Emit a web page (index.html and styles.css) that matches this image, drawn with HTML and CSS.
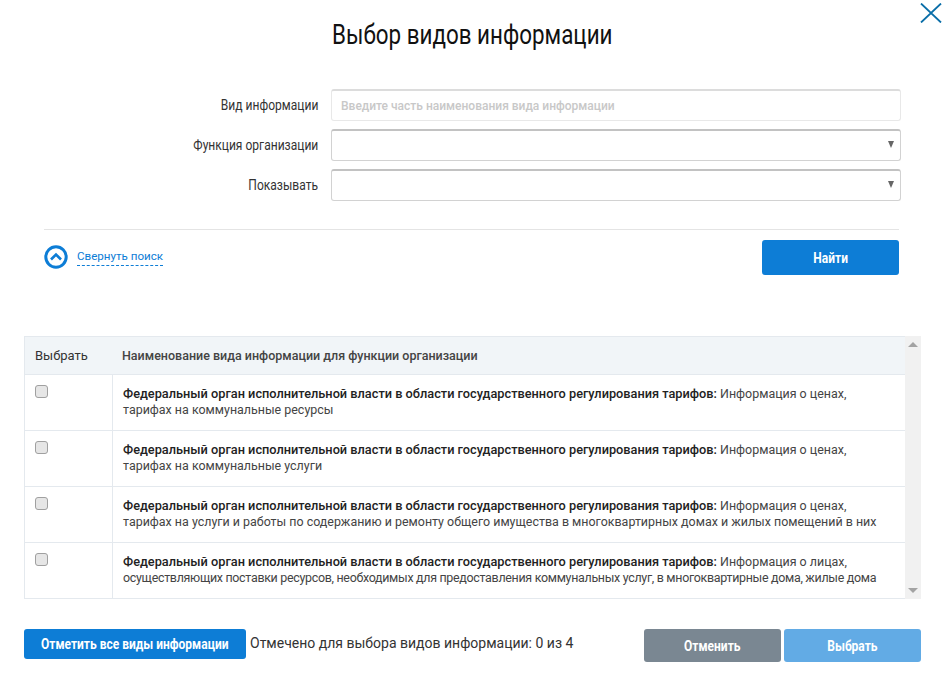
FILE: index.html
```html
<!DOCTYPE html>
<html lang="ru">
<head>
    <meta charset="UTF-8">
    <title>Выбор видов информации</title>
    <link rel="stylesheet" href="styles.css">
</head>
<body>
    <div class="dialog">
        <a class="close" href="#">
            <svg width="22" height="20" viewBox="0 0 22 20"><path d="M1 0.5L21 19.5M21 0.5L1 19.5" stroke="#0a6ea8" stroke-width="1.8" fill="none"/></svg>
        </a>
        <h1 class="title"><span class="narrow">Выбор видов информации</span></h1>

        <div class="form">
            <div class="form-row">
                <label class="form-label"><span class="narrow narrow-right">Вид информации</span></label>
                <input class="field field-light" type="text" placeholder="Введите часть наименования вида информации">
            </div>
            <div class="form-row">
                <label class="form-label"><span class="narrow narrow-right">Функция организации</span></label>
                <div class="field field-select"><span class="arrow"></span></div>
            </div>
            <div class="form-row">
                <label class="form-label"><span class="narrow narrow-right">Показывать</span></label>
                <div class="field field-select"><span class="arrow"></span></div>
            </div>
        </div>

        <div class="search-bar">
            <a class="collapse" href="#">
                <svg width="24" height="24" viewBox="0 0 24 24"><circle cx="12" cy="12" r="10.2" fill="none" stroke="#0d7dd6" stroke-width="3"/><path d="M7 14.5L12 9.5L17 14.5" fill="none" stroke="#0d7dd6" stroke-width="2.6"/></svg>
                <span class="collapse-text">Свернуть поиск</span>
            </a>
            <button class="button button-find"><span class="narrow">Найти</span></button>
        </div>

        <div class="table-wrap">
            <div class="table-main">
                <div class="row row-head">
                    <div class="cell-check">Выбрать</div>
                    <div class="cell-name">Наименование вида информации для функции организации</div>
                </div>
                <div class="row">
                    <div class="cell-check"><span class="check"></span></div>
                    <div class="cell-name"><b>Федеральный орган исполнительной власти в области государственного регулирования тарифов:</b> Информация о ценах, тарифах на коммунальные ресурсы</div>
                </div>
                <div class="row">
                    <div class="cell-check"><span class="check"></span></div>
                    <div class="cell-name"><b>Федеральный орган исполнительной власти в области государственного регулирования тарифов:</b> Информация о ценах, тарифах на коммунальные услуги</div>
                </div>
                <div class="row">
                    <div class="cell-check"><span class="check"></span></div>
                    <div class="cell-name"><b>Федеральный орган исполнительной власти в области государственного регулирования тарифов:</b> Информация о ценах, тарифах на услуги и работы по содержанию и ремонту общего имущества в многоквартирных домах и жилых помещений в них</div>
                </div>
                <div class="row">
                    <div class="cell-check"><span class="check"></span></div>
                    <div class="cell-name"><b>Федеральный орган исполнительной власти в области государственного регулирования тарифов:</b> Информация о лицах, <span class="tight">осуществляющих поставки ресурсов, необходимых для предоставления коммунальных услуг, в многоквартирные дома, жилые дома</span></div>
                </div>
            </div>
            <div class="scrollbar">
                <span class="scroll-up"></span>
                <span class="scroll-down"></span>
            </div>
        </div>

        <div class="footer">
            <button class="button button-all"><span class="narrow">Отметить все виды информации</span></button>
            <span class="status">Отмечено для выбора видов информации: 0 из 4</span>
            <button class="button button-cancel"><span class="narrow">Отменить</span></button>
            <button class="button button-select"><span class="narrow">Выбрать</span></button>
        </div>
    </div>
</body>
</html>
```

FILE: styles.css
```css
body {
    margin: 0;
    background: #fff;
    color: #333;
    font-family: Roboto, 'Liberation Sans', sans-serif;
    font-size: 12px;
}

.dialog {
    position: relative;
    width: 948px;
    height: 698px;
    box-sizing: border-box;
    padding: 19px 27px 0 24px;
}

.close {
    position: absolute;
    top: 3px;
    right: 6px;
}

/* no condensed font here, so squeeze the regular one */
.narrow {
    display: inline-block;
    white-space: nowrap;
    transform: scaleX(0.8);
}

.narrow-right {
    transform: scaleX(0.86);
    transform-origin: right center;
}

.title {
    margin: 0;
    width: 897px;
    text-align: center;
    font-size: 28px;
    line-height: 32px;
    font-weight: 400;
    color: #111;
}

.form {
    margin-top: 38px;
    padding-right: 20px;
}

.form-row {
    display: flex;
    align-items: center;
    margin-bottom: 8px;
}

.form-label {
    width: 294px;
    margin-right: 13px;
    text-align: right;
    font-size: 14px;
}

.field {
    flex: 1;
    height: 32px;
    box-sizing: border-box;
    position: relative;
    background: #fff;
    border: 1px solid #d2d2d2;
    border-top: 2px solid #c2c2c2;
    border-radius: 3px;
}

.field-light {
    padding: 0 9px;
    border-color: #e8e8e8;
    border-top: 2px solid #dcdcdc;
    font-family: Roboto, sans-serif;
    font-size: 12px;
    font-weight: 500;
    outline: none;
}

.field-light::placeholder {
    color: #c8c8c8;
}

.arrow {
    position: absolute;
    top: 10px;
    right: 6px;
    border-left: 3px solid transparent;
    border-right: 3px solid transparent;
    border-top: 7px solid #666;
}

.search-bar {
    display: flex;
    justify-content: space-between;
    align-items: flex-start;
    margin: 28px 22px 0 20px;
    height: 96px;
    border-top: 1px solid #e4e4e4;
    padding-top: 10px;
}

.collapse {
    display: flex;
    align-items: center;
    gap: 9px;
    margin-top: 5px;
    text-decoration: none;
}

.collapse-text {
    color: #0d7dd6;
    padding: 1px 0 2px;
    border-bottom: 1px dashed #0d7dd6;
    font-size: 11.6px;
}

.button {
    border: none;
    border-radius: 3px;
    color: #fff;
    font-family: Roboto, sans-serif;
    font-weight: 700;
    font-size: 15px;
    cursor: pointer;
    padding: 0;
}

.button-find {
    width: 137px;
    height: 35px;
    background: #0d7dd6;
}

.table-wrap {
    display: flex;
    width: 897px;
    height: 263px;
    overflow: hidden;
}

.table-main {
    width: 881px;
    box-sizing: border-box;
    border-left: 1px solid #e4e9ee;
    border-bottom: 1px solid #e4e9ee;
}

.row {
    display: flex;
    height: 56px;
    box-sizing: border-box;
    border-bottom: 1px solid #e4e9ee;
}

.row:last-child {
    height: 55px;
    border-bottom: none;
}

.row-head {
    height: 39px;
    align-items: center;
    background: #f1f5f8;
    border-top: 1px solid #e4e9ee;
}

.cell-check {
    width: 88px;
    flex-shrink: 0;
    box-sizing: border-box;
    padding-left: 10px;
}

.row-head .cell-name, .row-head .cell-check {
    font-size: 12.5px;
    font-weight: 500;
    padding-top: 0;
}

.row-head .cell-check {
    font-weight: 400;
    font-size: 13px;
}

.row-head .cell-name {
    padding-left: 9px;
}

.row:not(.row-head) .cell-check {
    padding-top: 10px;
    border-right: 1px solid #e4e9ee;
}

.check {
    display: block;
    width: 11px;
    height: 11px;
    border: 1px solid #a0a0a0;
    border-radius: 3px;
    background: #e6e6e6;
}

.cell-name {
    flex: 1;
    padding: 11px 10px 0 10px;
    line-height: 16px;
    font-size: 12.45px;
    color: #444;
}

.cell-name b {
    font-size: 12.75px;
    font-weight: 500;
    color: #222;
}

.tight {
    letter-spacing: -0.3px;
}

.scrollbar {
    position: relative;
    width: 16px;
    background: #f1f1f1;
}

.scroll-up, .scroll-down {
    position: absolute;
    left: 3px;
    border-left: 5px solid transparent;
    border-right: 5px solid transparent;
}

.scroll-up {
    top: 6px;
    border-bottom: 5px solid #a3a3a3;
}

.scroll-down {
    bottom: 6px;
    border-top: 5px solid #a3a3a3;
}

.footer {
    display: flex;
    align-items: flex-start;
    margin-top: 30px;
    width: 897px;
}

.button-all {
    width: 222px;
    height: 30px;
    padding-left: 17px;
    text-align: left;
    background: #0d7dd6;
}

.button-all .narrow {
    transform-origin: left center;
}

.status {
    flex: 1;
    margin-left: 4px;
    font-size: 14px;
    line-height: 28px;
}

.button-cancel, .button-select {
    width: 137px;
    height: 33px;
}

.button-cancel {
    background: #7a8792;
    margin-right: 3px;
}

.button-select {
    background: #62abe5;
}
```
